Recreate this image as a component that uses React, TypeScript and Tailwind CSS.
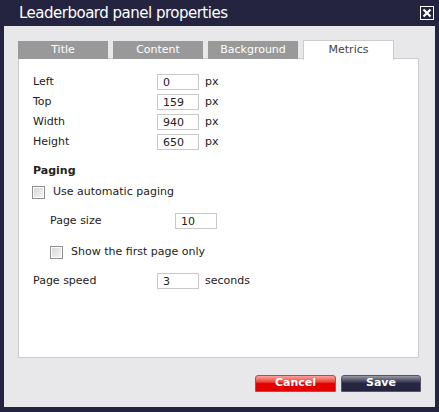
import React from "react";

const font = { fontFamily: '"DejaVu Sans", Verdana, sans-serif' };

function Input({ value, w = 42 }: { value: string; w?: number }) {
  return (
    <div
      className="h-[16px] border border-[#c8c8c8] bg-white flex items-center pl-[5px] text-[11px] text-[#222] leading-none"
      style={{ width: w }}
    >
      {value}
    </div>
  );
}

function Checkbox() {
  return (
    <div className="w-[13px] h-[13px] border border-[#8e8e8e] bg-white p-[1px]">
      <div className="w-full h-full bg-gradient-to-br from-[#d8d8d8] to-[#f4f4f4]" />
    </div>
  );
}

function Row({ label, value, unit }: { label: string; value: string; unit: string }) {
  return (
    <div className="h-[20px] flex items-center">
      <div className="w-[124px]">{label}</div>
      <Input value={value} />
      <div className="ml-[6px]">{unit}</div>
    </div>
  );
}

export default function App() {
  return (
    <div className="w-[439px] h-[412px] bg-[#242441] flex flex-col" style={font}>
      <div className="h-[26px] flex items-center pl-[19px] pr-[5px]">
        <div className="text-white text-[15px] tracking-[-0.5px] leading-none flex-1">Leaderboard panel properties</div>
        <div className="w-[14px] h-[14px] border border-white flex items-center justify-center">
          <svg width="10" height="10" viewBox="0 0 10 10">
            <path d="M1.5 1.5 L8.5 8.5 M8.5 1.5 L1.5 8.5" stroke="white" strokeWidth="2.2" />
          </svg>
        </div>
      </div>
      <div className="mx-[4px] h-[381px] bg-[#e8e8ea] flex flex-col pl-[14px] pr-[15px] pt-[13px]">
        <div className="flex items-end gap-[5px] h-[20px] relative z-10">
          {["Title", "Content", "Background"].map((t) => (
            <div
              key={t}
              className="w-[90px] h-[18px] bg-[#999999] text-white text-[11px] flex items-center justify-center"
            >
              {t}
            </div>
          ))}
          <div className="w-[91px] h-[20px] bg-white border border-b-0 border-[#cccccc] text-[#444] text-[11px] flex items-center justify-center -mb-[1px]">
            Metrics
          </div>
        </div>
        <div className="h-[300px] w-[401px] bg-white border border-[#cccccc] -mt-[1px] pl-[14px] pt-[13px] text-[11px] text-[#222] flex flex-col">
          <Row label="Left" value="0" unit="px" />
          <Row label="Top" value="159" unit="px" />
          <Row label="Width" value="940" unit="px" />
          <Row label="Height" value="650" unit="px" />
          <div className="h-[20px] mt-[9px] flex items-center font-bold">Paging</div>
          <div className="h-[20px] mt-[1px] flex items-center -ml-[1px]">
            <Checkbox />
            <div className="ml-[8px]">Use automatic paging</div>
          </div>
          <div className="h-[20px] mt-[9px] flex items-center pl-[17px]">
            <div className="w-[125px]">Page size</div>
            <Input value="10" />
          </div>
          <div className="h-[20px] mt-[11px] flex items-center pl-[17px]">
            <Checkbox />
            <div className="ml-[8px]">Show the first page only</div>
          </div>
          <div className="h-[20px] mt-[9px] flex items-center">
            <div className="w-[124px]">Page speed</div>
            <Input value="3" />
            <div className="ml-[6px]">seconds</div>
          </div>
        </div>
        <div className="flex justify-end gap-[5px] mt-[17px] -mr-[1px]">
          <div className="w-[81px] h-[17px] rounded-t-[3px] border border-[#d04040] bg-gradient-to-b from-[#f7a0a0] via-[#e60000] to-[#e00000] text-white font-bold text-[11px] flex items-center justify-center">
            Cancel
          </div>
          <div className="w-[80px] h-[17px] rounded-t-[3px] border border-[#55556a] bg-gradient-to-b from-[#9a9aa8] via-[#27273f] to-[#242441] text-white font-bold text-[11px] flex items-center justify-center">
            Save
          </div>
        </div>
      </div>
    </div>
  );
}
